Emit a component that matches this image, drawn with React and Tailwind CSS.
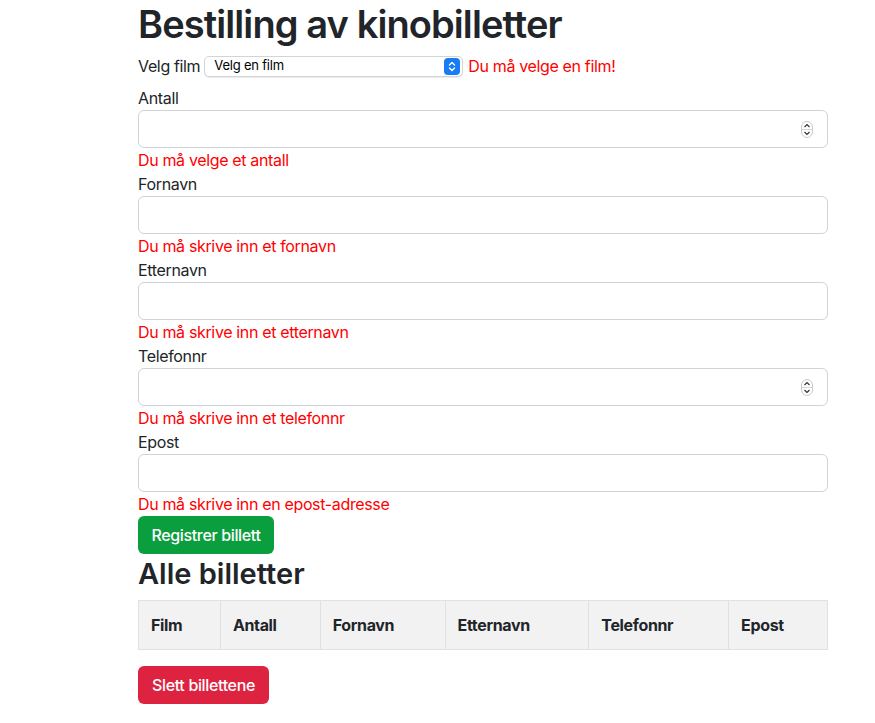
import React from "react";

const font = { fontFamily: "Inter, 'Liberation Sans', sans-serif" };

function Spinner() {
  return (
    <svg width="12" height="17" viewBox="0 0 12 17" className="absolute right-[14px] top-[10px]">
      <rect x="0.5" y="0.5" width="11" height="16" rx="5.5" fill="#fff" stroke="#c9c9c9" />
      <line x1="0.5" y1="8.5" x2="11.5" y2="8.5" stroke="#d6d6d6" />
      <path d="M3.5 6 L6 3.6 L8.5 6" fill="none" stroke="#333" strokeWidth="1.2" />
      <path d="M3.5 11 L6 13.4 L8.5 11" fill="none" stroke="#333" strokeWidth="1.2" />
    </svg>
  );
}

function Field({ label, error, spinner }) {
  return (
    <div>
      <div className="h-[24px] leading-[24px] text-[16px] text-[#212529]">{label}</div>
      <div className="relative h-[38px] rounded-[6px] border border-[#ced4da] bg-white">
        {spinner && <Spinner />}
      </div>
      <div className="h-[24px] leading-[24px] text-[16px] text-[#ff0000]">{error}</div>
    </div>
  );
}

export default function App() {
  return (
    <div className="min-h-[723px] bg-white tracking-[-0.35px]" style={font}>
      <div className="ml-[138px] w-[690px]">
        <h1 className="h-[48px] text-[38px] leading-[48px] font-semibold tracking-[-0.9px] text-[#212529]">
          Bestilling av kinobilletter
        </h1>
        <div className="mt-[6px] flex h-[24px] items-center text-[16px] text-[#212529]">
          <span>Velg film</span>
          <div className="relative ml-[4px] flex h-[21px] w-[259px] items-center rounded-[5px] border border-[#d4d4d4] bg-white pl-[9px] text-[13px] tracking-[-0.2px] text-black shadow-[0_1px_1px_rgba(0,0,0,0.08)]">
            Velg en film
            <div className="absolute right-[2px] top-[1px] flex h-[17px] w-[16px] items-center justify-center rounded-[4px] bg-[#1a7cf5]">
              <svg width="10" height="13" viewBox="0 0 10 13">
                <path d="M2.5 5 L5 2.5 L7.5 5" fill="none" stroke="#fff" strokeWidth="1.4" strokeLinecap="round" strokeLinejoin="round" />
                <path d="M2.5 8 L5 10.5 L7.5 8" fill="none" stroke="#fff" strokeWidth="1.4" strokeLinecap="round" strokeLinejoin="round" />
              </svg>
            </div>
          </div>
          <span className="ml-[5px] text-[#ff0000]">Du må velge en film!</span>
        </div>
        <div className="mt-[8px]">
          <Field label="Antall" error="Du må velge et antall" spinner />
          <Field label="Fornavn" error="Du må skrive inn et fornavn" />
          <Field label="Etternavn" error="Du må skrive inn et etternavn" />
          <Field label="Telefonnr" error="Du må skrive inn et telefonnr" spinner />
          <Field label="Epost" error="Du må skrive inn en epost-adresse" />
        </div>
        <button className="flex h-[38px] w-[136px] items-center justify-center rounded-[6px] bg-[#0b9e3e] text-[16px] font-medium text-white">
          Registrer billett
        </button>
        <h2 className="mt-[2px] h-[36px] text-[29px] leading-[36px] font-semibold tracking-[0px] text-[#212529]">
          Alle billetter
        </h2>
        <table className="mt-[8px] w-[690px] border-collapse border border-[#dee2e6] bg-[#f2f2f2] text-left text-[16px] text-[#212529]">
          <thead>
            <tr className="h-[49px]">
              <th className="w-[82px] border border-[#dee2e6] px-[12px] font-bold">Film</th>
              <th className="w-[100px] border border-[#dee2e6] px-[12px] font-bold">Antall</th>
              <th className="w-[125px] border border-[#dee2e6] px-[12px] font-bold">Fornavn</th>
              <th className="w-[144px] border border-[#dee2e6] px-[12px] font-bold">Etternavn</th>
              <th className="w-[140px] border border-[#dee2e6] px-[12px] font-bold">Telefonnr</th>
              <th className="w-[99px] border border-[#dee2e6] px-[12px] font-bold">Epost</th>
            </tr>
          </thead>
        </table>
        <button className="mt-[16px] flex h-[38px] w-[131px] items-center justify-center rounded-[6px] bg-[#dd233f] text-[16px] font-medium text-white">
          Slett billettene
        </button>
      </div>
    </div>
  );
}
